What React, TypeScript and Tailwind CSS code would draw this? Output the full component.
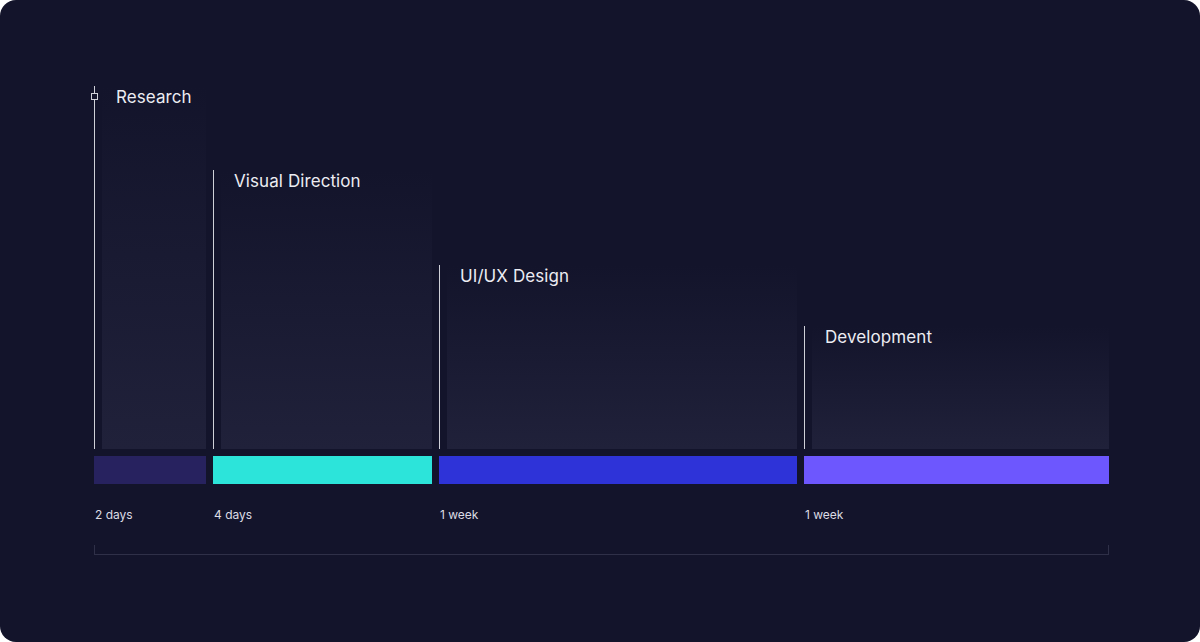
import React from "react";

type Phase = {
  name: string;
  duration: string;
  width: string;
  height: string;
  bar: string;
  marker?: boolean;
};

const phases: Phase[] = [
  { name: "Research", duration: "2 days", width: "w-[112px]", height: "h-[363px]", bar: "bg-[#27225f]", marker: true },
  { name: "Visual Direction", duration: "4 days", width: "w-[219px]", height: "h-[279px]", bar: "bg-[#2ce4da]" },
  { name: "UI/UX Design", duration: "1 week", width: "w-[358px]", height: "h-[184px]", bar: "bg-[#2e33d8]" },
  { name: "Development", duration: "1 week", width: "w-[305px]", height: "h-[123px]", bar: "bg-[#6d57fe]" },
];

function PhaseColumn({ phase }: { phase: Phase }) {
  return (
    <div className={`${phase.width} ${phase.height} grid`}>
      {/* line + shaded area */}
      <div className="col-start-1 row-start-1 flex">
        <div className="w-px bg-[#cfd0d8]" />
        <div className="ml-[7px] flex-1 bg-gradient-to-b from-[#13142b]/0 to-[#20213a]" />
      </div>
      {/* label */}
      <div className="col-start-1 row-start-1 flex items-start">
        {phase.marker ? (
          <div className="mt-[7px] -ml-[3px] w-[7px] h-[7px] border border-[#cfd0d8] bg-[#13142b]" />
        ) : null}
        <span
          className={`${phase.marker ? "ml-[18px]" : "ml-[21px]"} mt-[1px] text-[17px] leading-[20px] tracking-[0.005em] text-[#ececf2]`}
        >
          {phase.name}
        </span>
      </div>
    </div>
  );
}

export default function App() {
  return (
    <div className="w-[1200px] h-[642px] bg-white" style={{ fontFamily: "Inter, 'Noto Sans', sans-serif" }}>
      <div className="w-full h-full rounded-2xl bg-[#13142b] pt-[86px] pl-[94px]">
        {/* chart */}
        <div className="flex items-end gap-[7px] h-[363px]">
          {phases.map((p) => (
            <PhaseColumn key={p.name} phase={p} />
          ))}
        </div>

        {/* bars */}
        <div className="flex gap-[7px] mt-[7px]">
          {phases.map((p) => (
            <div key={p.name} className={`${p.width} h-[28px] ${p.bar}`} />
          ))}
        </div>

        {/* durations */}
        <div className="flex gap-[7px] mt-[23px]">
          {phases.map((p) => (
            <div key={p.name} className={`${p.width} pl-px text-[12px] leading-[16px] text-[#dcdce4]`}>
              {p.duration}
            </div>
          ))}
        </div>

        {/* bracket */}
        <div className="w-[1015px] h-[10px] mt-[22px] border-l border-r border-b border-[#2f3048]" />
      </div>
    </div>
  );
}
